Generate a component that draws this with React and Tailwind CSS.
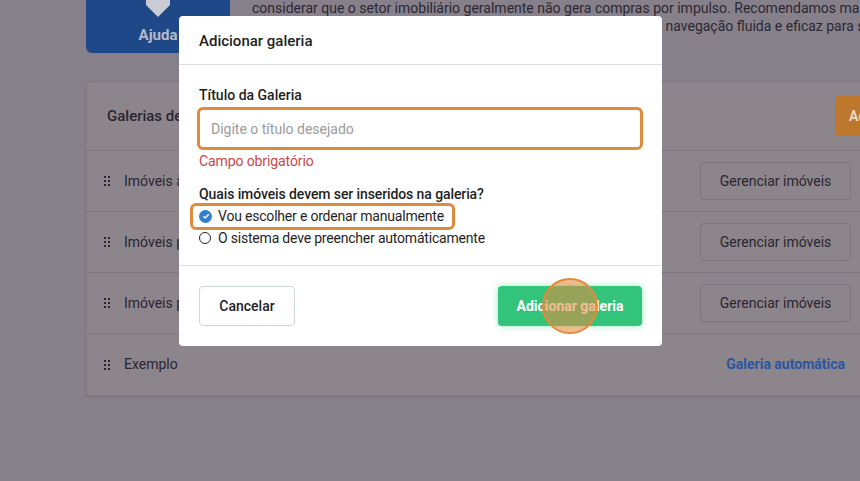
import React from "react";

const rows = [
  { name: "Imóveis à venda", action: "manage" },
  { name: "Imóveis para alugar", action: "manage" },
  { name: "Imóveis para temporada", action: "manage" },
  { name: "Exemplo", action: "auto" },
];

const DragHandle = () => (
  <svg width="6" height="10" viewBox="0 0 6 10" className="shrink-0">
    {[0, 1].map((c) =>
      [0, 1, 2].map((r) => (
        <rect key={`${c}-${r}`} x={c * 4} y={r * 4} width="2" height="2" fill="#2a2530" />
      ))
    )}
  </svg>
);

const App = () => {
  return (
    <div
      className="relative w-[860px] h-[481px] overflow-hidden bg-[#86808b]"
      style={{ fontFamily: "Roboto, 'Liberation Sans', sans-serif" }}
    >
      {/* background page, already dimmed by the modal overlay */}
      <div className="pl-[86px]">
        <div className="flex items-start">
          <div className="w-[144px] h-[53px] shrink-0 bg-[#1e4887] rounded-b-md flex flex-col items-center">
            <svg width="26" height="18" viewBox="0 0 26 18">
              <polygon points="1,0 25,0 25,5 13,17 1,5" fill="#c9ccd6" />
            </svg>
            <span className="mt-[7px] text-[15px] font-bold text-[#b6b9c9] leading-5">Ajuda</span>
          </div>
          <p className="ml-[22px] w-[640px] text-[14px] leading-[18px] text-[#2c2731] whitespace-nowrap overflow-hidden -mt-px">
            considerar que o setor imobiliário geralmente não gera compras por impulso. Recomendamos manter
            <br />
            suas galerias organizadas e com poucos imóveis, garantindo uma navegação fluida e eficaz para seus
          </p>
        </div>

        <div className="mt-[28px] w-[786px] bg-[#8c858c] border border-[#817b83] rounded-sm shadow-sm">
          <div className="h-[69px] flex items-center pl-5 border-b border-[#7e7880]">
            <span className="text-[15px] font-medium text-[#2a2530]">Galerias de imóveis</span>
            <button className="ml-auto mr-[-104px] w-[140px] h-[40px] rounded bg-[#bd772c] text-[14px] font-bold text-[#e8d6c4] text-left pl-[14px]">
              Adicionar galeria
            </button>
          </div>
          {rows.map((row, i) => (
            <div
              key={row.name}
              className={`h-[61px] flex items-center pl-[17px] pr-5 ${i < rows.length - 1 ? "border-b border-[#7e7880]" : ""}`}
            >
              <DragHandle />
              <span className="ml-[14px] text-[14px] text-[#2a2530]">{row.name}</span>
              {row.action === "manage" ? (
                <button className="ml-auto w-[151px] h-[38px] rounded border border-[#7b757d] text-[14px] text-[#2a2530]">
                  Gerenciar imóveis
                </button>
              ) : (
                <span className="ml-auto mr-[6px] text-[14px] font-bold text-[#2a56a0]">Galeria automática</span>
              )}
            </div>
          ))}
        </div>
      </div>

      {/* modal */}
      <div className="absolute left-[179px] top-[16px] w-[483px] bg-white rounded">
        <div className="h-[49px] flex items-center pt-[3px] px-5 border-b border-[#dedede]">
          <h2 className="text-[15px] font-medium text-[#1f1f1f]">Adicionar galeria</h2>
        </div>

        <div className="pl-5 pr-[21px] pt-[20px] pb-[16px]">
          <label className="block text-[14px] font-medium leading-5 text-[#1f1f1f]">Título da Galeria</label>
          <input
            type="text"
            placeholder="Digite o título desejado"
            className="mt-[2px] -ml-[2px] w-[446px] h-[43px] px-[11px] rounded-md border-[3px] border-[#e08a3c] text-[14px] placeholder:text-[#9b9b9b] outline-none"
          />
          <p className="mt-[2px] text-[14px] leading-[18px] tracking-[-0.1px] text-[#c9474d]">Campo obrigatório</p>

          <p className="mt-[14px] text-[14px] font-medium leading-5 tracking-[-0.1px] text-[#1f1f1f]">
            Quais imóveis devem ser inseridos na galeria?
          </p>
          <div className="mt-[1px] flex flex-col">
            <label className="relative flex items-center h-[22px]">
              <span className="absolute left-[-9px] top-[-2px] w-[265px] h-[27px] rounded-md border-[3px] border-[#e08a3c]" />
              <span className="w-[13px] h-[13px] rounded-full bg-[#2f7fd3] flex items-center justify-center">
                <svg width="8" height="8" viewBox="0 0 8 8">
                  <path d="M1.3 4.2 L3.2 6 L6.7 2.2" fill="none" stroke="white" strokeWidth="1.5" />
                </svg>
              </span>
              <span className="ml-[6px] text-[14px] tracking-[-0.2px] text-[#1f1f1f]">Vou escolher e ordenar manualmente</span>
            </label>
            <label className="flex items-center h-[22px]">
              <span className="w-[12px] h-[12px] rounded-full border-[1.5px] border-[#222]" />
              <span className="ml-[7px] text-[14px] tracking-[-0.2px] text-[#1f1f1f]">O sistema deve preencher automáticamente</span>
            </label>
          </div>
        </div>

        <div className="h-[81px] flex items-center justify-between pl-5 pr-5 border-t border-[#dedede]">
          <button className="w-[96px] h-[40px] rounded border border-[#cfd6e2] text-[14px] font-medium text-[#1f1f1f]">
            Cancelar
          </button>
          <button className="relative w-[144px] h-[40px] rounded bg-[#33c47c] shadow-[0_0_6px_rgba(80,220,140,0.6)] text-[14px] font-bold text-white">
            Adicionar galeria
            <span className="absolute left-[44px] top-[-8px] w-[56px] h-[56px] rounded-full border-2 border-[#e8893a] bg-[#e8893a]/55" />
          </button>
        </div>
      </div>
    </div>
  );
};

export default App;
